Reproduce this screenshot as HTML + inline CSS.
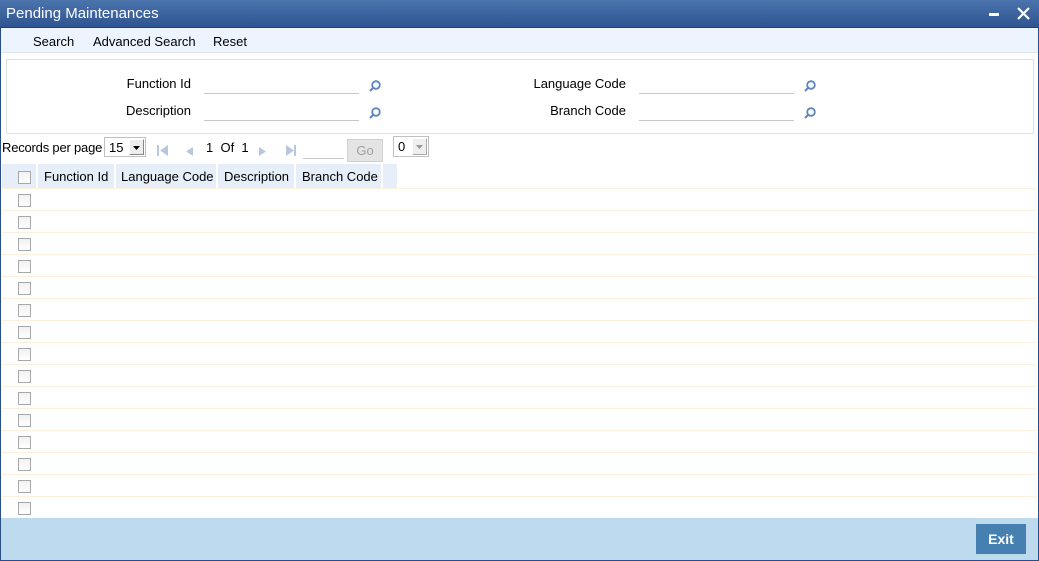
<!DOCTYPE html>
<html><head><style>
*{margin:0;padding:0;box-sizing:border-box}
body{width:1039px;height:561px;overflow:hidden;font-family:"Liberation Sans",Arial,sans-serif;font-size:13px;color:#000;background:#fff;position:relative}
.a{position:absolute}
.lbl{position:absolute;text-align:right;width:150px}
.inp{position:absolute;height:1px;background:#c8c8c8;width:155px}
.mag{position:absolute;width:14px;height:14px}
.cb{position:absolute;left:18px;width:13px;height:13px;border:1px solid #a8a8a8;background:linear-gradient(#f0f0f0,#fff)}
.row{position:absolute;left:2px;right:2px;height:22px;border-bottom:1px solid #fcefdc}
.hc{position:absolute;top:164px;height:24px;line-height:26px;background:#e6eefa;border-right:2px solid #fff}
</style></head><body>
<div class="a" style="left:0;top:0;width:1039px;height:561px;border:1px solid #2a4f88;border-top:none"></div>
<div class="a" style="left:0;top:0;width:1039px;height:28px;background:linear-gradient(#4b73ac,#2f5592);border-bottom:1px solid #1f3f75"></div>
<div class="a" style="left:6px;top:5px;color:#fff;font-size:15px">Pending Maintenances</div>
<div class="a" style="left:989px;top:13px;width:10px;height:3px;background:#fff"></div>
<svg class="a" style="left:1017px;top:7px" width="13" height="13"><path d="M1 1L12 12M12 1L1 12" stroke="#fff" stroke-width="2.2"/></svg>
<div class="a" style="left:1px;top:28px;width:1037px;height:25px;background:#edf4fd;border-bottom:1px solid #dde4ec"></div>
<div class="a" style="left:33px;top:34px">Search</div>
<div class="a" style="left:93px;top:34px">Advanced Search</div>
<div class="a" style="left:213px;top:34px">Reset</div>
<div class="a" style="left:6px;top:59px;width:1028px;height:75px;border:1px solid #e0e0e0"></div>
<div class="lbl" style="left:41px;top:76px">Function Id</div>
<div class="lbl" style="left:41px;top:103px">Description</div>
<div class="lbl" style="left:476px;top:76px">Language Code</div>
<div class="lbl" style="left:476px;top:103px">Branch Code</div>
<div class="inp" style="left:204px;top:93px"></div>
<div class="inp" style="left:204px;top:120px"></div>
<div class="inp" style="left:639px;top:93px"></div>
<div class="inp" style="left:639px;top:120px"></div>
<svg class="mag" style="left:368px;top:79px"><circle cx="8" cy="6" r="3.8" fill="none" stroke="#5b86c0" stroke-width="1.8"/><path d="M5.5 8.5L2 12" stroke="#5b86c0" stroke-width="2"/></svg>
<svg class="mag" style="left:368px;top:106px"><circle cx="8" cy="6" r="3.8" fill="none" stroke="#5b86c0" stroke-width="1.8"/><path d="M5.5 8.5L2 12" stroke="#5b86c0" stroke-width="2"/></svg>
<svg class="mag" style="left:803px;top:79px"><circle cx="8" cy="6" r="3.8" fill="none" stroke="#5b86c0" stroke-width="1.8"/><path d="M5.5 8.5L2 12" stroke="#5b86c0" stroke-width="2"/></svg>
<svg class="mag" style="left:803px;top:106px"><circle cx="8" cy="6" r="3.8" fill="none" stroke="#5b86c0" stroke-width="1.8"/><path d="M5.5 8.5L2 12" stroke="#5b86c0" stroke-width="2"/></svg>
<div class="a" style="left:2px;top:140px;letter-spacing:-0.2px">Records per page</div>
<div class="a" style="left:104px;top:137px;width:42px;height:20px;border:1px solid #c0c0c0;background:#fff"><span class="a" style="left:4px;top:2px">15</span><div class="a" style="left:24px;top:1px;width:15px;height:16px;background:#eee;border:1px solid #888;border-top-color:#fff;border-left-color:#fff"><svg width="13" height="14"><path d="M3 6h7l-3.5 4z" fill="#000"/></svg></div></div>
<svg class="a" style="left:156px;top:144px" width="14" height="14"><rect x="1" y="1" width="2" height="11" fill="#b8c8dc"/><path d="M12 1L4 6.5 12 12z" fill="#b8c8dc"/></svg>
<svg class="a" style="left:184px;top:146px" width="12" height="12"><path d="M9 1L2 5.5 9 10z" fill="#b8c8dc"/></svg>
<div class="a" style="left:206px;top:140px">1 &nbsp;Of &nbsp;1</div>
<svg class="a" style="left:257px;top:146px" width="12" height="12"><path d="M2 1L9 5.5 2 10z" fill="#b8c8dc"/></svg>
<svg class="a" style="left:284px;top:144px" width="14" height="14"><path d="M2 1L10 6.5 2 12z" fill="#b8c8dc"/><rect x="10" y="1" width="2" height="11" fill="#b8c8dc"/></svg>
<div class="a" style="left:303px;top:158px;width:41px;height:1px;background:#c8c8c8"></div>
<div class="a" style="left:347px;top:139px;width:36px;height:23px;background:#e4e4e4;border:1px solid #d0d0d0;color:#a0a0a0;text-align:center;line-height:21px">Go</div>
<div class="a" style="left:393px;top:136px;width:36px;height:21px;border:1px solid #c0c0c0;background:#fff"><span class="a" style="left:4px;top:2px">0</span><div class="a" style="left:18px;top:1px;width:15px;height:17px;background:#eee;border:1px solid #aaa;border-top-color:#fff;border-left-color:#fff"><svg width="13" height="14"><path d="M3 6h7l-3.5 4z" fill="#999"/></svg></div></div>
<div class="hc" style="left:2px;width:36px"></div>
<div class="hc" style="left:38px;width:78px;padding-left:6px">Function Id</div>
<div class="hc" style="left:116px;width:102px;padding-left:5px">Language Code</div>
<div class="hc" style="left:218px;width:78px;padding-left:6px">Description</div>
<div class="hc" style="left:296px;width:87px;padding-left:6px">Branch Code</div>
<div class="hc" style="left:383px;width:14px;border:none"></div>
<div class="cb" style="top:171px"></div>
<div class="a" style="left:2px;top:188px;right:2px;height:1px;background:#fcefdc"></div>
<div class="row" style="top:189px"></div><div class="cb" style="top:194px"></div>
<div class="row" style="top:211px"></div><div class="cb" style="top:216px"></div>
<div class="row" style="top:233px"></div><div class="cb" style="top:238px"></div>
<div class="row" style="top:255px"></div><div class="cb" style="top:260px"></div>
<div class="row" style="top:277px"></div><div class="cb" style="top:282px"></div>
<div class="row" style="top:299px"></div><div class="cb" style="top:304px"></div>
<div class="row" style="top:321px"></div><div class="cb" style="top:326px"></div>
<div class="row" style="top:343px"></div><div class="cb" style="top:348px"></div>
<div class="row" style="top:365px"></div><div class="cb" style="top:370px"></div>
<div class="row" style="top:387px"></div><div class="cb" style="top:392px"></div>
<div class="row" style="top:409px"></div><div class="cb" style="top:414px"></div>
<div class="row" style="top:431px"></div><div class="cb" style="top:436px"></div>
<div class="row" style="top:453px"></div><div class="cb" style="top:458px"></div>
<div class="row" style="top:475px"></div><div class="cb" style="top:480px"></div>
<div class="row" style="top:497px;border:none"></div><div class="cb" style="top:502px"></div>
<div class="a" style="left:1px;top:518px;width:1037px;height:42px;background:#bedaee"></div>
<div class="a" style="left:0;top:560px;width:1039px;height:1px;background:#2a4f88"></div>
<div class="a" style="left:976px;top:524px;width:50px;height:30px;background:#4680b0;color:#fff;font-size:14px;font-weight:bold;text-align:center;line-height:30px">Exit</div>
</body></html>
